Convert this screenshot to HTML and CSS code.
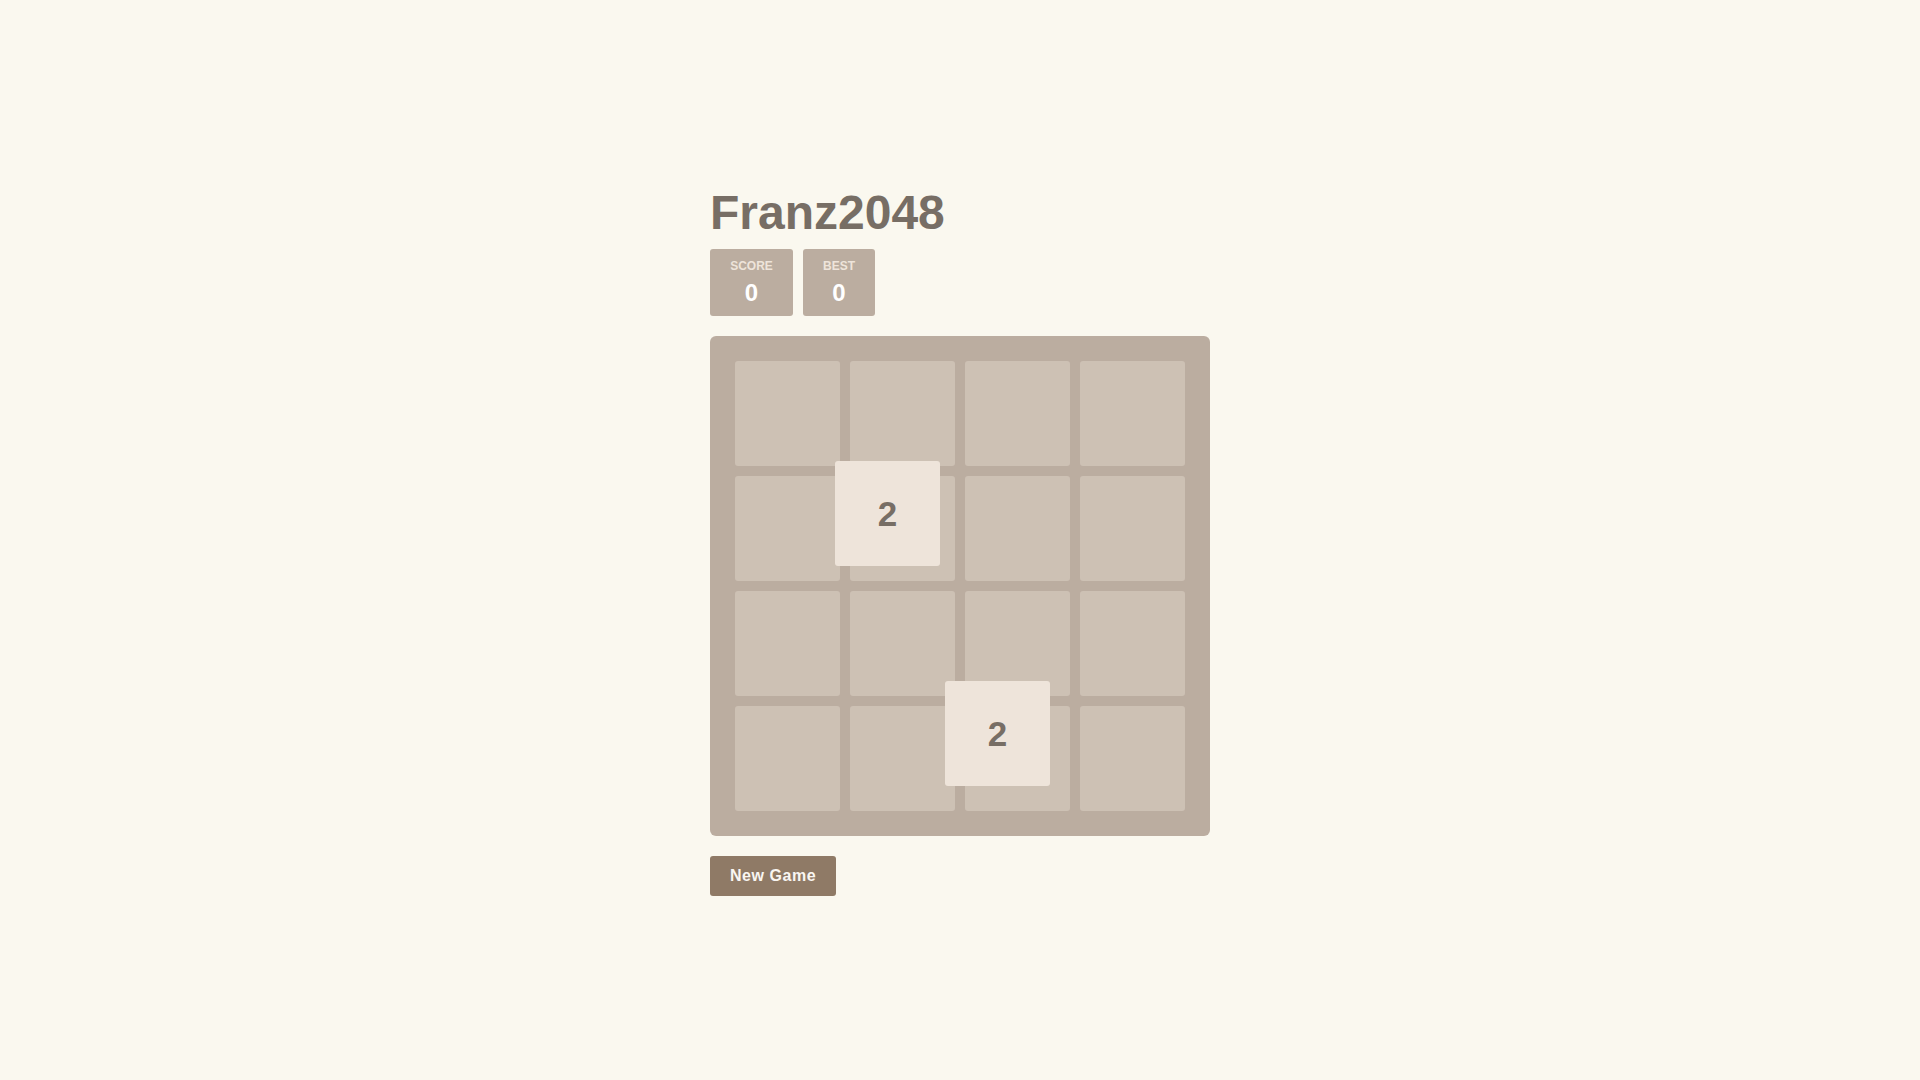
FILE: index.html
```html
<!DOCTYPE html>
<html lang="en">
<head>
<meta charset="utf-8">
<title>Franz2048</title>
<link rel="stylesheet" href="styles.css">
</head>
<body>
<main class="game">
  <h1 class="title">Franz2048</h1>
  <div class="scores">
    <div class="score-box score-box--score">
      <div class="score-label">SCORE</div>
      <div class="score-value">0</div>
    </div>
    <div class="score-box score-box--best">
      <div class="score-label">BEST</div>
      <div class="score-value">0</div>
    </div>
  </div>
  <div class="board">
    <div class="cell"></div><div class="cell"></div><div class="cell"></div><div class="cell"></div>
    <div class="cell"></div><div class="cell"></div><div class="cell"></div><div class="cell"></div>
    <div class="cell"></div><div class="cell"></div><div class="cell"></div><div class="cell"></div>
    <div class="cell"></div><div class="cell"></div><div class="cell"></div><div class="cell"></div>
    <div class="tile tile-2" style="left:125px;top:125px">2</div>
    <div class="tile tile-2" style="left:235px;top:345px">2</div>
  </div>
  <button class="new-game" type="button">New Game</button>
</main>
</body>
</html>
```

FILE: styles.css
```css
html, body {
  margin: 0;
  padding: 0;
}

body {
  background: #faf8ef;
  font-family: "Liberation Sans", Arial, sans-serif;
  color: #776e65;
  min-height: 100vh;
  display: flex;
  align-items: center;
  justify-content: center;
}

.game {
  width: 500px;
  display: flex;
  flex-direction: column;
  align-items: flex-start;
}

.title {
  margin: 0;
  font-size: 48px;
  line-height: 55px;
  font-weight: 700;
  color: #776e65;
}

.scores {
  display: flex;
  gap: 10px;
  margin-top: 9px;
}

.score-box {
  background: #bbada0;
  border-radius: 3px;
  height: 67px;
  box-sizing: border-box;
  padding: 10px 0 0;
  text-align: center;
}

.score-box--score { width: 83px; }
.score-box--best { width: 72px; }

.score-label {
  font-size: 12px;
  line-height: 14px;
  font-weight: 700;
  color: #eee4da;
}

.score-value {
  margin-top: 5px;
  font-size: 24px;
  line-height: 29px;
  font-weight: 700;
  color: #ffffff;
}

.board {
  position: relative;
  margin-top: 20px;
  width: 500px;
  height: 500px;
  box-sizing: border-box;
  padding: 25px;
  background: #bbada0;
  border-radius: 6px;
  display: grid;
  grid-template-columns: repeat(4, 105px);
  grid-template-rows: repeat(4, 105px);
  gap: 10px;
}

.cell {
  background: #cdc1b4;
  border-radius: 3px;
}

.tile {
  position: absolute;
  width: 105px;
  height: 105px;
  box-sizing: border-box;
  padding-top: 2px;
  border-radius: 3px;
  display: flex;
  align-items: center;
  justify-content: center;
  font-size: 35px;
  font-weight: 700;
}

.tile-2 {
  background: #eee4da;
  color: #776e65;
}

.new-game {
  margin-top: 20px;
  height: 40px;
  padding: 0 20px;
  border: none;
  border-radius: 3px;
  background: #8f7a66;
  color: #f9f6f2;
  font-family: "Liberation Sans", Arial, sans-serif;
  font-size: 16px;
  letter-spacing: 0.55px;
  font-weight: 700;
  cursor: pointer;
}
```
